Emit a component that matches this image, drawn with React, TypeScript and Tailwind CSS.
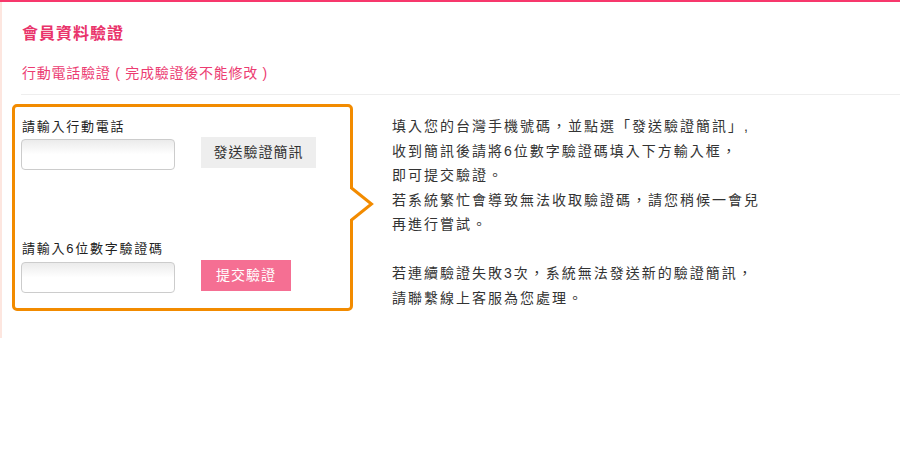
import React from "react"

const fontCls = "font-['Liberation_Sans','Noto_Sans_CJK_TC',sans-serif]"

const PhoneVerify = () => {
    return (
        <div className={`min-h-[450px] bg-white ${fontCls}`}>
            <div className="h-[2px] bg-[#f7386c]"></div>
            <div className="h-[336px] border-l-2 border-[#fde6df]">
                <div className="ml-[19px] border-b border-[#eeeeee] pb-[11px]">
                    <h1 className="pt-[22px] pl-[1px] text-[16px] leading-[20px] tracking-[1px] font-bold text-[#e9336b]">會員資料驗證</h1>
                    <p className="mt-[19px] pl-[1px] text-[14px] leading-[20px] tracking-[0.75px] text-[#ec3c72]">
                        行動電話驗證 ( 完成驗證後不能修改 )
                    </p>
                </div>

                <div className="mt-[9px] ml-[10px] flex">
                    <div className="relative h-[207px] w-[341px] rounded-[5px] border-[3px] border-[#f28b00] pt-[11px] pl-[6px]">
                        <div className="pl-[1px] text-[13px] leading-[18px] tracking-[1.75px] text-[#222]">請輸入行動電話</div>
                        <div className="mt-[3px] flex items-start gap-[26px]">
                            <input className="h-[31px] w-[154px] rounded-[4px] border border-[#cccccc] bg-linear-to-b from-[#ebebeb] via-white to-white outline-none" />
                            <button className="-mt-[2px] h-[31px] w-[115px] bg-[#eeeeee] text-[14px] tracking-[1px] text-[#333]">發送驗證簡訊</button>
                        </div>
                        <div className="mt-[70px] pl-[1px] text-[13px] leading-[18px] tracking-[1.75px] text-[#222]">請輸入6位數字驗證碼</div>
                        <div className="mt-[4px] flex items-start gap-[26px]">
                            <input className="h-[31px] w-[154px] rounded-[4px] border border-[#cccccc] bg-linear-to-b from-[#ebebeb] via-white to-white outline-none" />
                            <button className="-mt-[2px] h-[31px] w-[90px] bg-[#f56f93] text-[14px] tracking-[1px] text-white">提交驗證</button>
                        </div>
                        <svg className="absolute top-[75px] left-[331px] h-[44px] w-[29px]" viewBox="0 0 29 44">
                            <rect x="3.5" y="7" width="4" height="30" fill="#ffffff" />
                            <polyline points="5.5,6 25.5,22 5.5,38" fill="none" stroke="#f28b00" strokeWidth="3" strokeLinejoin="miter" />
                        </svg>
                    </div>

                    <div className="ml-[39px] mt-[10px] text-[14px] leading-[24.5px] tracking-[2px] text-[#333]">
                        <p>填入您的台灣手機號碼，並點選「發送驗證簡訊」,</p>
                        <p>收到簡訊後請將6位數字驗證碼填入下方輸入框，</p>
                        <p>即可提交驗證。</p>
                        <p>若系統繁忙會導致無法收取驗證碼，請您稍候一會兒</p>
                        <p>再進行嘗試。</p>
                        <p>&nbsp;</p>
                        <p>若連續驗證失敗3次，系統無法發送新的驗證簡訊，</p>
                        <p>請聯繫線上客服為您處理。</p>
                    </div>
                </div>
            </div>
        </div>
    )
}

export default function App() {
    return <PhoneVerify />
}
